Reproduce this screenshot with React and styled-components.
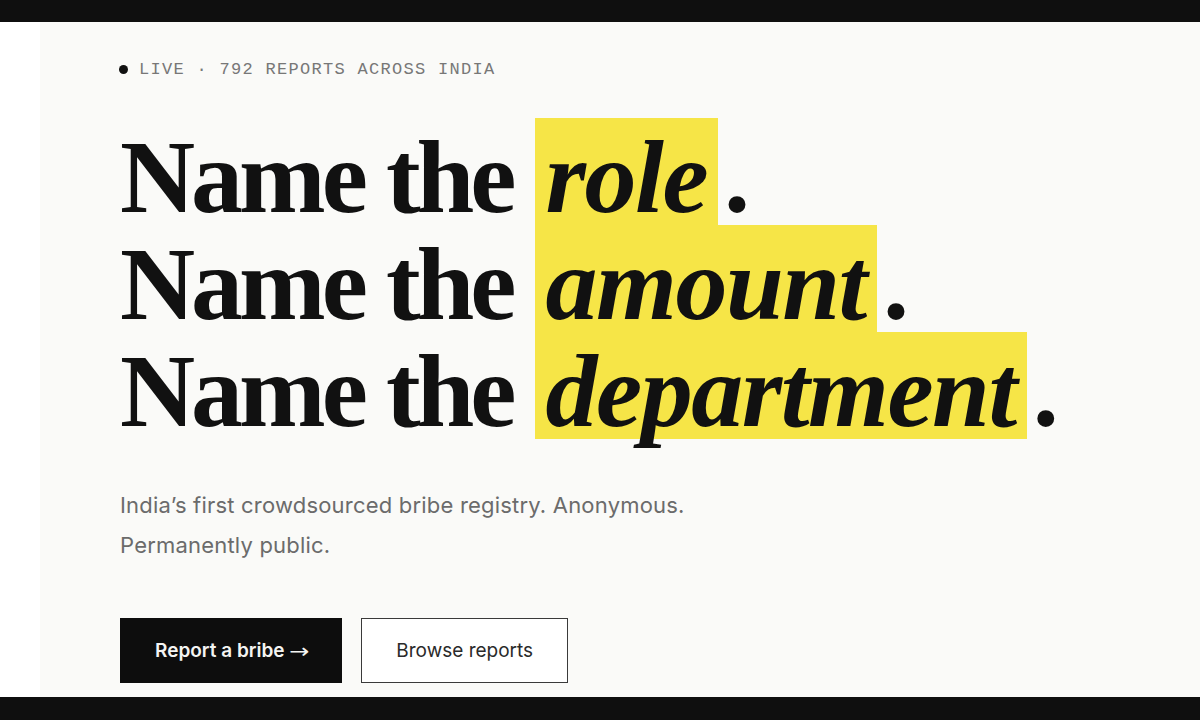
import styled, { createGlobalStyle } from "styled-components";

const Global = createGlobalStyle`
  html, body { margin: 0; padding: 0; }
  body {
    background: #0f0f0f;
    font-family: Inter, "Noto Sans", sans-serif;
    -webkit-font-smoothing: antialiased;
  }
`;

const Frame = styled.div`
  width: 1200px;
  height: 720px;
  display: flex;
  flex-direction: column;
  background: #0f0f0f;
`;

const Bar = styled.div`
  height: ${(p) => p.h}px;
  flex: none;
  background: #0f0f0f;
`;

const Body = styled.div`
  flex: 1;
  display: flex;
  overflow: hidden;
`;

const Gutter = styled.div`
  width: 40px;
  flex: none;
  background: #ffffff;
`;

const Main = styled.main`
  flex: 1;
  background: #fafaf8;
  padding: 37px 0 0 80px;
  display: flex;
  flex-direction: column;
`;

const Live = styled.div`
  display: flex;
  align-items: center;
  gap: 11px;
  height: 20px;
  font-family: "Liberation Mono", "DejaVu Sans Mono", monospace;
  font-size: 17px;
  letter-spacing: 1.3px;
  text-transform: uppercase;
  color: #777777;
`;

const Dot = styled.span`
  width: 9px;
  height: 9px;
  border-radius: 50%;
  background: #111;
  margin-left: -1px;
`;

const Headline = styled.h1`
  margin: 39px 0 0;
  font-family: "Liberation Serif", "Times New Roman", serif;
  font-weight: 700;
  font-size: 104px;
  letter-spacing: -4px;
  color: #111;
  display: flex;
  flex-direction: column;
`;

const Line = styled.div`
  display: flex;
  height: 107px;
  white-space: pre;
`;

const Chunk = styled.span`
  box-sizing: border-box;
  height: 107px;
  padding-top: 10px;
  line-height: 97px;
`;

const Mark = styled(Chunk)`
  background: #f6e547;
  font-style: italic;
  padding-left: 11px;
  padding-right: 11px;
  letter-spacing: -1.5px;
`;

const Stop = styled(Chunk)`
  margin-left: 6px;
`;

const Lede = styled.p`
  margin: 46px 0 0;
  max-width: 620px;
  font-size: 22px;
  line-height: 40px;
  letter-spacing: 0.2px;
  color: #6b6b6b;
`;

const Actions = styled.div`
  display: flex;
  gap: 19px;
  margin-top: 53px;
`;

const Button = styled.button`
  height: 65px;
  padding: 0 ${(p) => (p.primary ? 34 : 34)}px;
  display: flex;
  align-items: center;
  gap: 6px;
  font-family: Inter, "Noto Sans", sans-serif;
  font-size: 19px;
  font-weight: ${(p) => (p.primary ? 600 : 400)};
  color: ${(p) => (p.primary ? "#f4f4f2" : "#2a2a2a")};
  background: ${(p) => (p.primary ? "#0d0d0d" : "#ffffff")};
  border: 1px solid ${(p) => (p.primary ? "#0d0d0d" : "#3a3a3a")};
  border-radius: 0;
  cursor: pointer;
`;

const Arrow = styled.span`
  font-family: "DejaVu Sans", sans-serif;
  font-weight: 400;
  font-size: 20px;
  transform: scaleX(1.2);
`;

const words = ["role", "amount", "department"];

export default function App() {
  return (
    <>
      <Global />
      <Frame>
        <Bar h={22} />
        <Body>
          <Gutter />
          <Main>
            <Live>
              <Dot />
              <span>Live · 792 reports across India</span>
            </Live>
            <Headline>
              {words.map((w) => (
                <Line key={w}>
                  <Chunk>Name the </Chunk>
                  <Mark>{w}</Mark>
                  <Stop>.</Stop>
                </Line>
              ))}
            </Headline>
            <Lede>
              India’s first crowdsourced bribe registry. Anonymous. Permanently public.
            </Lede>
            <Actions>
              <Button primary>
                Report a bribe <Arrow>→</Arrow>
              </Button>
              <Button>Browse reports</Button>
            </Actions>
          </Main>
        </Body>
        <Bar h={23} />
      </Frame>
    </>
  );
}
